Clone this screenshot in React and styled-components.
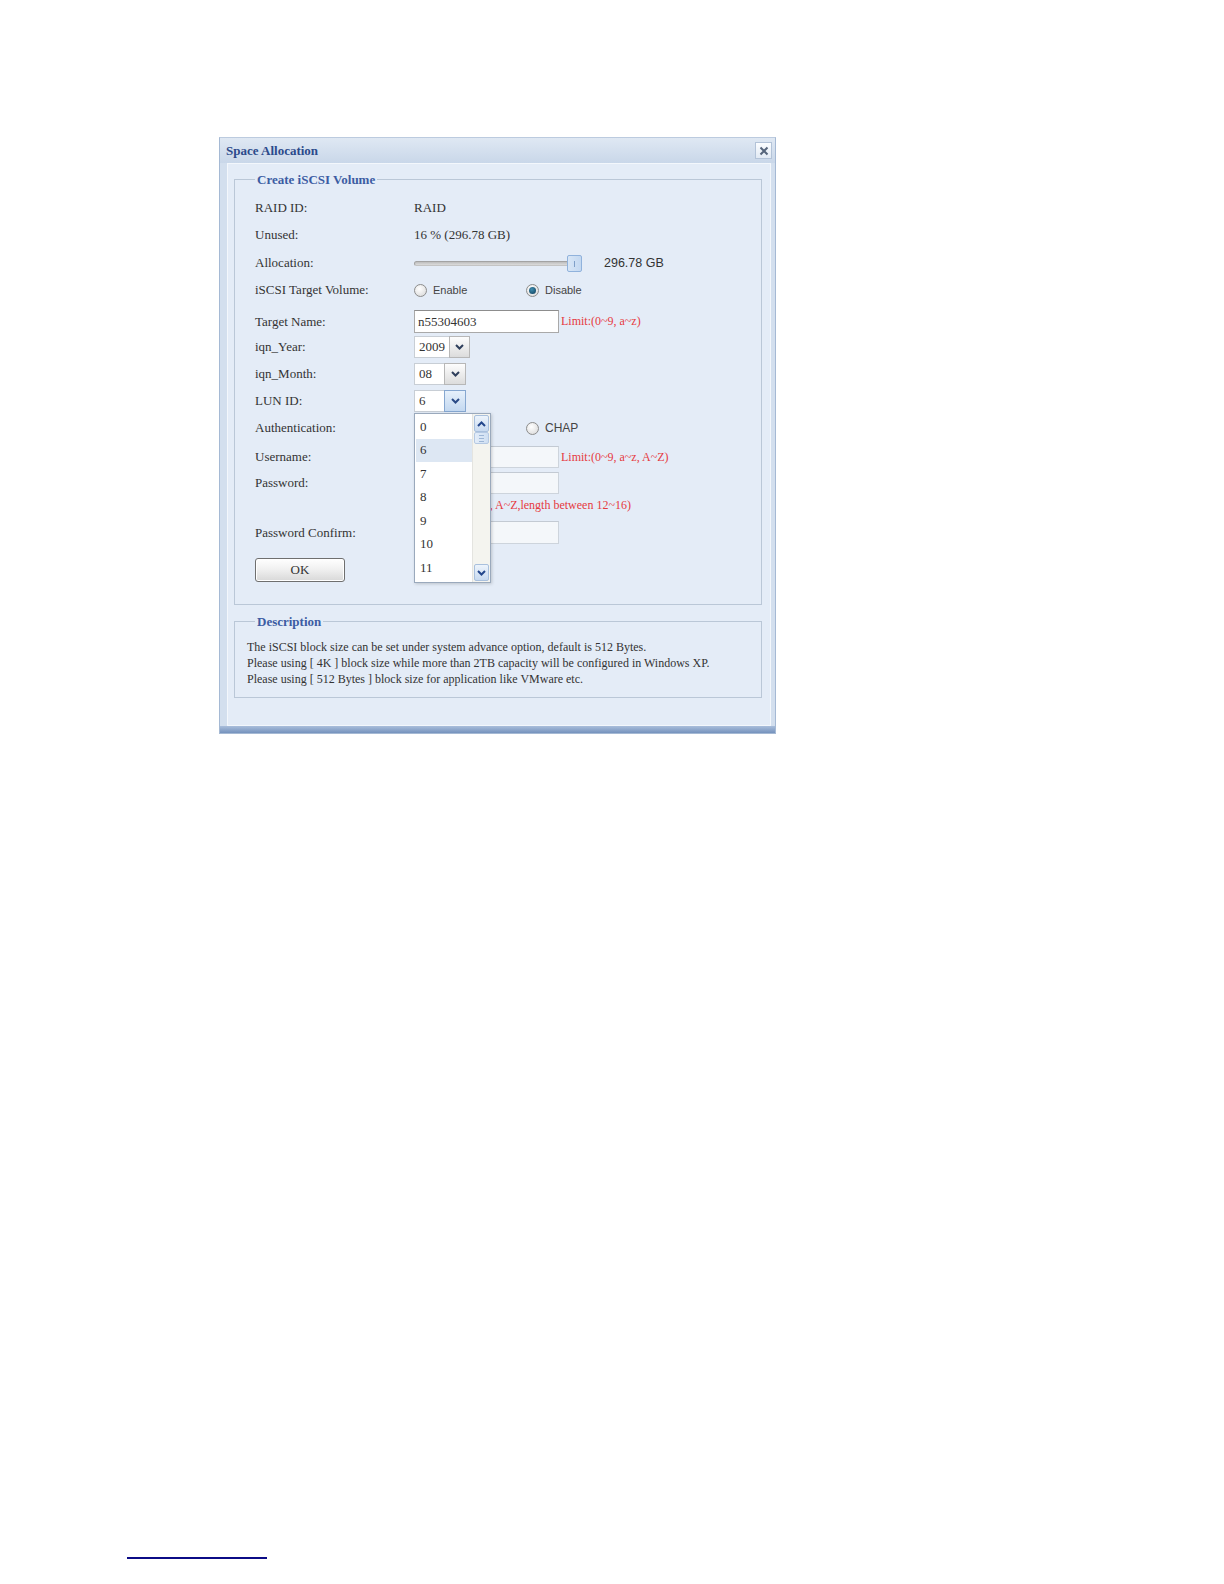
import React from "react";
import styled, { createGlobalStyle } from "styled-components";

const GlobalStyle = createGlobalStyle`
  html, body {
    margin: 0;
    padding: 0;
    background: #ffffff;
  }
  body {
    font-family: "Liberation Serif", "Times New Roman", serif;
    color: #333;
  }
`;

const Page = styled.div`
  min-height: 1584px;
  box-sizing: border-box;
  padding-top: 137px;
  display: flex;
  flex-direction: column;
`;

const Window = styled.div`
  margin-left: 219px;
  width: 557px;
  box-sizing: border-box;
  border: 1px solid #a5b9d4;
  border-top-color: #bccbdf;
  background: #d3dfee;
  display: flex;
  flex-direction: column;
`;

const TitleBar = styled.div`
  height: 25px;
  display: flex;
  align-items: center;
  justify-content: space-between;
  padding: 0 3px 0 6px;
  background: linear-gradient(#dfe8f3, #c9d7e9);
`;

const Title = styled.span`
  font-weight: bold;
  font-size: 13px;
  color: #2b4a8b;
`;

const CloseButton = styled.div`
  width: 17px;
  height: 17px;
  box-sizing: border-box;
  border: 1px solid #b3c3d8;
  background: linear-gradient(#fbfdff, #e2eaf4);
  display: flex;
  align-items: center;
  justify-content: center;
`;

const Body = styled.div`
  margin: 0 4px 0 7px;
  border: 1px solid #f3f7fc;
  background: #e4ecf7;
  padding: 8px 8px 27px 6px;
  display: flex;
  flex-direction: column;
`;

const BottomBand = styled.div`
  height: 7px;
  background: linear-gradient(#a9bedb, #7592bd);
`;

const Fieldset = styled.fieldset`
  margin: 0;
  min-width: 0;
  border: 1px solid #bac7d7;
  padding: ${(p) => p.$pad};
  & + & {
    margin-top: 9px;
  }
`;

const Legend = styled.legend`
  padding: 0 2px;
  margin-left: ${(p) => p.$ml || 0}px;
  font-weight: bold;
  font-size: 13px;
  line-height: 15px;
  color: #3c5ca3;
`;

const Row = styled.div`
  display: grid;
  grid-template-columns: 159px auto;
  align-items: center;
  height: ${(p) => p.$h || 22}px;
  margin-top: ${(p) => p.$mt || 0}px;
  font-size: 13px;
  color: #333;
`;

const Cell = styled.div`
  display: flex;
  align-items: center;
  position: relative;
`;

const SliderBox = styled.div`
  position: relative;
  width: 168px;
  height: 17px;
  display: flex;
  align-items: center;
`;

const SliderTrack = styled.div`
  width: 158px;
  height: 5px;
  box-sizing: border-box;
  border-radius: 3px;
  border: 1px solid #a3a3a3;
  border-bottom-color: #c4c4c4;
  background: linear-gradient(#bdbdbd, #dcdcdc);
`;

const SliderThumb = styled.div`
  position: absolute;
  right: 0;
  top: 0;
  width: 15px;
  height: 17px;
  box-sizing: border-box;
  border: 1px solid #90b2dc;
  border-radius: 2px;
  background: linear-gradient(90deg, #d8e6f6, #c3d8f1);
  &::after {
    content: "";
    position: absolute;
    left: 6px;
    top: 5px;
    width: 1px;
    height: 6px;
    background: #7f9fc8;
  }
`;

const SliderValue = styled.span`
  margin-left: 22px;
  font-family: "Liberation Sans", Arial, sans-serif;
  font-size: 12.5px;
  color: #333;
`;

const RadioOption = styled.label`
  display: flex;
  align-items: center;
  width: ${(p) => p.$w || "auto"};
  font-family: "Liberation Sans", Arial, sans-serif;
  font-size: ${(p) => p.$fs || 11}px;
  color: #444;
`;

const RadioDot = styled.span`
  width: 13px;
  height: 13px;
  box-sizing: border-box;
  border-radius: 50%;
  border: 1px solid #8c8c8c;
  background: radial-gradient(circle at 40% 35%, #ffffff, #d6d6d6);
  margin-right: 6px;
  display: flex;
  align-items: center;
  justify-content: center;
  &::after {
    content: "";
    display: ${(p) => (p.$on ? "block" : "none")};
    width: 7px;
    height: 7px;
    border-radius: 50%;
    background: radial-gradient(circle at 40% 35%, #3f8db0, #0d3b58);
  }
`;

const TextInput = styled.div`
  width: 145px;
  height: ${(p) => p.$h || 23}px;
  box-sizing: border-box;
  border: 1px solid ${(p) => (p.$disabled ? "#cdd4dc" : "#a9a9a9")};
  border-top-color: ${(p) => (p.$disabled ? "#c3cad3" : "#8d8d8d")};
  background: ${(p) => (p.$disabled ? "#f4f7fa" : "#ffffff")};
  padding: 0 3px;
  font-size: 13px;
  line-height: 21px;
  color: #333;
`;

const Hint = styled.span`
  margin-left: ${(p) => p.$ml ?? 2}px;
  font-size: 12px;
  color: #e63a3f;
  white-space: nowrap;
`;

const Select = styled.div`
  display: flex;
  height: 22px;
  position: relative;
`;

const SelectText = styled.div`
  width: ${(p) => p.$w}px;
  height: 100%;
  box-sizing: border-box;
  background: #ffffff;
  border: 1px solid #c8ced5;
  border-right: none;
  padding-left: 4px;
  font-size: 13px;
  line-height: 20px;
  color: #333;
`;

const SelectButton = styled.div`
  width: ${(p) => p.$w || 22}px;
  height: 100%;
  box-sizing: border-box;
  border: 1px solid ${(p) => (p.$active ? "#86a7d0" : "#b7b7b7")};
  background: ${(p) =>
    p.$active
      ? "linear-gradient(#e6f0fb, #c3d8f0)"
      : "linear-gradient(#fdfdfd, #dcdcdc)"};
  display: flex;
  align-items: center;
  justify-content: center;
`;

const Dropdown = styled.div`
  position: absolute;
  top: calc(100% + 1px);
  left: 0;
  width: 77px;
  height: 170px;
  box-sizing: border-box;
  border: 1px solid #9aa9bc;
  background: #ffffff;
  box-shadow: 1px 1px 3px rgba(0, 0, 0, 0.18);
  display: flex;
  z-index: 5;
`;

const OptionList = styled.div`
  flex: 1;
  padding: 1px 0 0 1px;
`;

const OptionItem = styled.div`
  height: 23.5px;
  display: flex;
  align-items: center;
  padding-left: 4px;
  font-size: 13px;
  color: #333;
  background: ${(p) => (p.$selected ? "#dde7f3" : "transparent")};
`;

const Scrollbar = styled.div`
  width: 18px;
  box-sizing: border-box;
  padding: 1px;
  background: #f4f4ef;
  border-left: 1px solid #e4e4e0;
  display: flex;
  flex-direction: column;
`;

const ScrollButton = styled.div`
  height: 17px;
  box-sizing: border-box;
  border: 1px solid #a9c0dd;
  border-radius: 2px;
  background: linear-gradient(#edf4fc, #c8daf0);
  display: flex;
  align-items: center;
  justify-content: center;
`;

const ScrollThumb = styled.div`
  height: 12px;
  box-sizing: border-box;
  border: 1px solid #b5c9e3;
  border-radius: 2px;
  background: linear-gradient(90deg, #e3edf9, #cfdff2);
  display: flex;
  flex-direction: column;
  justify-content: center;
  gap: 2px;
  padding: 0 4px;
  & > span {
    height: 1px;
    background: #9db6d6;
  }
`;

const ScrollSpace = styled.div`
  flex: 1;
`;

const OkButton = styled.button`
  margin-top: 14px;
  width: 90px;
  height: 24px;
  box-sizing: border-box;
  border: 1px solid #6f6f6f;
  border-radius: 3px;
  background: linear-gradient(#ffffff, #f1f1f1 45%, #d8d8d8);
  box-shadow: inset 0 0 0 1px #ffffff;
  font-family: "Liberation Serif", "Times New Roman", serif;
  font-size: 13px;
  color: #333;
  padding: 0;
`;

const DescText = styled.div`
  font-size: 12px;
  line-height: 16px;
  color: #333;
`;

const FooterRule = styled.div`
  margin-top: auto;
  margin-bottom: 25px;
  margin-left: 127px;
  width: 140px;
  height: 2px;
  background: #0b0b86;
`;

const Chevron = ({ up, color = "#2f3f5c" }) => (
  <svg width="9" height="6" viewBox="0 0 9 6">
    <polyline
      points={up ? "1,5 4.5,1.5 8,5" : "1,1 4.5,4.5 8,1"}
      fill="none"
      stroke={color}
      strokeWidth="2"
    />
  </svg>
);

const lunOptions = ["0", "6", "7", "8", "9", "10", "11"];

export default function App() {
  return (
    <Page>
      <GlobalStyle />
      <Window>
        <TitleBar>
          <Title>Space Allocation</Title>
          <CloseButton>
            <svg width="10" height="10" viewBox="0 0 10 10">
              <path d="M1.5 1.5 L8.5 8.5 M8.5 1.5 L1.5 8.5" stroke="#56657b" strokeWidth="2" />
            </svg>
          </CloseButton>
        </TitleBar>
        <Body>
          <Fieldset $pad="10px 20px 22px 20px">
            <Legend>Create iSCSI Volume</Legend>
            <Row>
              <span>RAID ID:</span>
              <span>RAID</span>
            </Row>
            <Row $mt={5}>
              <span>Unused:</span>
              <span>16 % (296.78 GB)</span>
            </Row>
            <Row $mt={6}>
              <span>Allocation:</span>
              <Cell>
                <SliderBox>
                  <SliderTrack />
                  <SliderThumb />
                </SliderBox>
                <SliderValue>296.78 GB</SliderValue>
              </Cell>
            </Row>
            <Row $mt={5}>
              <span>iSCSI Target Volume:</span>
              <Cell>
                <RadioOption $w="112px">
                  <RadioDot />
                  Enable
                </RadioOption>
                <RadioOption>
                  <RadioDot $on />
                  Disable
                </RadioOption>
              </Cell>
            </Row>
            <Row $mt={9} $h={23}>
              <span>Target Name:</span>
              <Cell>
                <TextInput>n55304603</TextInput>
                <Hint>Limit:(0~9, a~z)</Hint>
              </Cell>
            </Row>
            <Row $mt={3}>
              <span>iqn_Year:</span>
              <Cell>
                <Select>
                  <SelectText $w={35}>2009</SelectText>
                  <SelectButton $w={21}>
                    <Chevron />
                  </SelectButton>
                </Select>
              </Cell>
            </Row>
            <Row $mt={5}>
              <span>iqn_Month:</span>
              <Cell>
                <Select>
                  <SelectText $w={30}>08</SelectText>
                  <SelectButton>
                    <Chevron />
                  </SelectButton>
                </Select>
              </Cell>
            </Row>
            <Row $mt={5}>
              <span>LUN ID:</span>
              <Cell>
                <Select>
                  <SelectText $w={30}>6</SelectText>
                  <SelectButton $active>
                    <Chevron color="#2a4a86" />
                  </SelectButton>
                  <Dropdown>
                    <OptionList>
                      {lunOptions.map((o) => (
                        <OptionItem key={o} $selected={o === "6"}>
                          {o}
                        </OptionItem>
                      ))}
                    </OptionList>
                    <Scrollbar>
                      <ScrollButton>
                        <Chevron up color="#24478c" />
                      </ScrollButton>
                      <ScrollThumb>
                        <span />
                        <span />
                        <span />
                      </ScrollThumb>
                      <ScrollSpace />
                      <ScrollButton>
                        <Chevron color="#24478c" />
                      </ScrollButton>
                    </Scrollbar>
                  </Dropdown>
                </Select>
              </Cell>
            </Row>
            <Row $mt={5}>
              <span>Authentication:</span>
              <Cell>
                <RadioOption $w="112px" $fs={12}>
                  <RadioDot $on />
                  None
                </RadioOption>
                <RadioOption $fs={12}>
                  <RadioDot />
                  CHAP
                </RadioOption>
              </Cell>
            </Row>
            <Row $mt={7}>
              <span>Username:</span>
              <Cell>
                <TextInput $disabled $h={22} />
                <Hint>Limit:(0~9, a~z, A~Z)</Hint>
              </Cell>
            </Row>
            <Row $mt={4}>
              <span>Password:</span>
              <Cell>
                <TextInput $disabled $h={22} />
              </Cell>
            </Row>
            <Row $mt={3} $h={16}>
              <span />
              <Cell>
                <Hint $ml={0}>Limit:(0~9, a~z, A~Z,length between 12~16)</Hint>
              </Cell>
            </Row>
            <Row $mt={8} $h={23}>
              <span>Password Confirm:</span>
              <Cell>
                <TextInput $disabled />
              </Cell>
            </Row>
            <OkButton type="button">OK</OkButton>
          </Fieldset>
          <Fieldset $pad="10px 12px 10px 12px">
            <Legend $ml={8}>Description</Legend>
            <DescText>
              The iSCSI block size can be set under system advance option, default is 512 Bytes.
              <br />
              Please using [ 4K ] block size while more than 2TB capacity will be configured in Windows XP.
              <br />
              Please using [ 512 Bytes ] block size for application like VMware etc.
            </DescText>
          </Fieldset>
        </Body>
        <BottomBand />
      </Window>
      <FooterRule />
    </Page>
  );
}
